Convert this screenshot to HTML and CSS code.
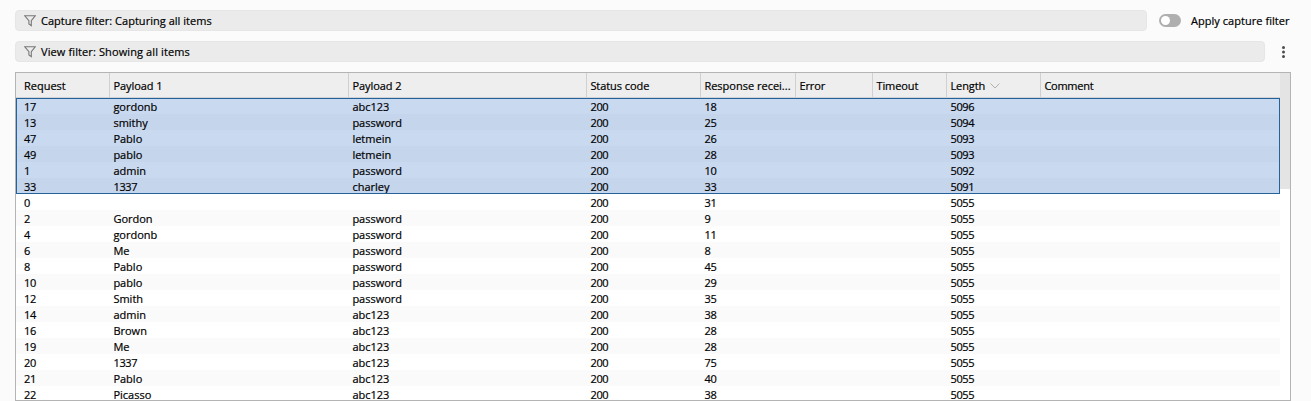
FILE: index.html
```html
<!DOCTYPE html>
<html lang="en">
<head>
<meta charset="utf-8">
<title>Attack results</title>
<link rel="stylesheet" href="styles.css">
</head>
<body>
<div class="filter-row">
  <div class="filter"><svg class="funnel" width="12" height="12" viewBox="0 0 12 12"><path d="M.8 .8H11.2L7.3 5.6V10.6L4.9 8.9V5.6Z"/></svg><span class="cap">Capture filter: Capturing all items</span></div>
  <div class="toggle"><span class="knob"></span></div>
  <span class="toggle-label">Apply capture filter</span>
</div>
<div class="filter-row second">
  <div class="filter"><svg class="funnel" width="12" height="12" viewBox="0 0 12 12"><path d="M.8 .8H11.2L7.3 5.6V10.6L4.9 8.9V5.6Z"/></svg><span class="view">View filter: Showing all items</span></div>
  <svg class="more" width="5" height="14" viewBox="0 0 5 14"><circle cx="2.5" cy="2.5" r="1.5"/><circle cx="2.5" cy="7" r="1.5"/><circle cx="2.5" cy="11.5" r="1.5"/></svg>
</div>
<div class="panel">
  <div class="table">
    <div class="row head"><span>Request</span><span>Payload 1</span><span>Payload 2</span><span>Status code</span><span class="resp">Response recei...</span><span>Error</span><span>Timeout</span><span>Length<svg class="sort" width="10" height="6" viewBox="0 0 10 6"><path d="M.5 .5L5 5L9.5 .5"/></svg></span><span>Comment</span></div>
    <div class="body">
      <div class="selection">
        <div class="row"><span>17</span><span>gordonb</span><span>abc123</span><span>200</span><span>18</span><span></span><span></span><span>5096</span><span></span></div>
        <div class="row"><span>13</span><span>smithy</span><span>password</span><span>200</span><span>25</span><span></span><span></span><span>5094</span><span></span></div>
        <div class="row"><span>47</span><span>Pablo</span><span>letmein</span><span>200</span><span>26</span><span></span><span></span><span>5093</span><span></span></div>
        <div class="row"><span>49</span><span>pablo</span><span>letmein</span><span>200</span><span>28</span><span></span><span></span><span>5093</span><span></span></div>
        <div class="row"><span>1</span><span>admin</span><span>password</span><span>200</span><span>10</span><span></span><span></span><span>5092</span><span></span></div>
        <div class="row"><span>33</span><span class="num">1337</span><span>charley</span><span>200</span><span>33</span><span></span><span></span><span>5091</span><span></span></div>
      </div>
      <div class="rest">
        <div class="row"><span>0</span><span></span><span></span><span>200</span><span>31</span><span></span><span></span><span>5055</span><span></span></div>
        <div class="row"><span>2</span><span>Gordon</span><span>password</span><span>200</span><span>9</span><span></span><span></span><span>5055</span><span></span></div>
        <div class="row"><span>4</span><span>gordonb</span><span>password</span><span>200</span><span>11</span><span></span><span></span><span>5055</span><span></span></div>
        <div class="row"><span>6</span><span>Me</span><span>password</span><span>200</span><span>8</span><span></span><span></span><span>5055</span><span></span></div>
        <div class="row"><span>8</span><span>Pablo</span><span>password</span><span>200</span><span>45</span><span></span><span></span><span>5055</span><span></span></div>
        <div class="row"><span>10</span><span>pablo</span><span>password</span><span>200</span><span>29</span><span></span><span></span><span>5055</span><span></span></div>
        <div class="row"><span>12</span><span>Smith</span><span>password</span><span>200</span><span>35</span><span></span><span></span><span>5055</span><span></span></div>
        <div class="row"><span>14</span><span>admin</span><span>abc123</span><span>200</span><span>38</span><span></span><span></span><span>5055</span><span></span></div>
        <div class="row"><span>16</span><span>Brown</span><span>abc123</span><span>200</span><span>28</span><span></span><span></span><span>5055</span><span></span></div>
        <div class="row"><span>19</span><span>Me</span><span>abc123</span><span>200</span><span>28</span><span></span><span></span><span>5055</span><span></span></div>
        <div class="row"><span>20</span><span class="num">1337</span><span>abc123</span><span>200</span><span>75</span><span></span><span></span><span>5055</span><span></span></div>
        <div class="row"><span>21</span><span>Pablo</span><span>abc123</span><span>200</span><span>40</span><span></span><span></span><span>5055</span><span></span></div>
        <div class="row"><span>22</span><span>Picasso</span><span>abc123</span><span>200</span><span>38</span><span></span><span></span><span>5055</span><span></span></div>
      </div>
    </div>
  </div>
  <div class="scrollbar"><div class="thumb"></div></div>
</div>
</body>
</html>
```

FILE: styles.css
```css
* { box-sizing: border-box; }
body {
  margin: 0;
  height: 401px;
  overflow: hidden;
  padding: 10px 20px 0 15px;
  background: #fbfbfb;
  color: #000;
  font: 11px/16px "Open Sans", "Noto Sans", sans-serif;
  -webkit-text-stroke: 0.2px #000;
}
.filter-row { display: flex; align-items: center; height: 21px; }
.second { margin-top: 10px; }
.filter {
  display: flex;
  align-items: center;
  width: 1132px;
  height: 21px;
  padding-left: 8px;
  border: 1px solid #e6e6e6;
  border-radius: 4px;
  background: #ebebeb;
}
.second .filter { width: 1250px; }
.filter span { margin-left: 5px; }
.cap { letter-spacing: 0.03px; }
.view { letter-spacing: 0.11px; }
.funnel { fill: none; stroke: #787878; stroke-width: 1.1; }
.toggle {
  width: 22px;
  height: 13px;
  margin-left: 12px;
  padding: 2px;
  border-radius: 7px;
  background: #afafaf;
}
.knob { display: block; width: 9px; height: 9px; border-radius: 50%; background: #fff; }
.toggle-label { margin-left: 10px; white-space: nowrap; letter-spacing: 0.04px; }
.more { margin-left: 15.5px; fill: #4c4c4c; }
.panel {
  display: flex;
  width: 1276px;
  height: 329px;
  margin-top: 10px;
  border: 1px solid #b4b4b4;
  background: #fff;
  overflow: hidden;
}
.table { width: 1264px; }
.row {
  display: grid;
  grid-template-columns: 94px 239px 238px 114px 95px 77px 74px 94px 239px;
  height: 16px;
}
.row > span { padding: 1px 0 0 3.4px; white-space: nowrap; }
.row > span:first-child { padding-left: 8px; }
.body span:first-child, .body span:nth-child(n+4), .num { letter-spacing: -0.3px; }
.head {
  height: 25px;
  background: #eee;
  border-bottom: 1px solid #d2d2d2;
}
.head > span { padding-top: 5px; border-right: 1px solid #d0d0d0; letter-spacing: -0.07px; }
.head > span:first-child { letter-spacing: 0; }
.head > .resp { letter-spacing: 0; }
.head > span:last-child { border-right: 0; letter-spacing: -0.25px; }
.sort { margin-left: 5px; vertical-align: 1px; fill: none; stroke: #b0b0b0; }
.selection { outline: 1px solid #24629c; outline-offset: -1px; }
.selection .row { background: #c9d9f0; }
.selection .row:nth-child(even) { background: #c5d5ec; }
.rest .row:nth-child(even) { background: #fafafa; }
.scrollbar { width: 10px; }
.thumb { height: 116px; background: #e4e4e4; }
```
